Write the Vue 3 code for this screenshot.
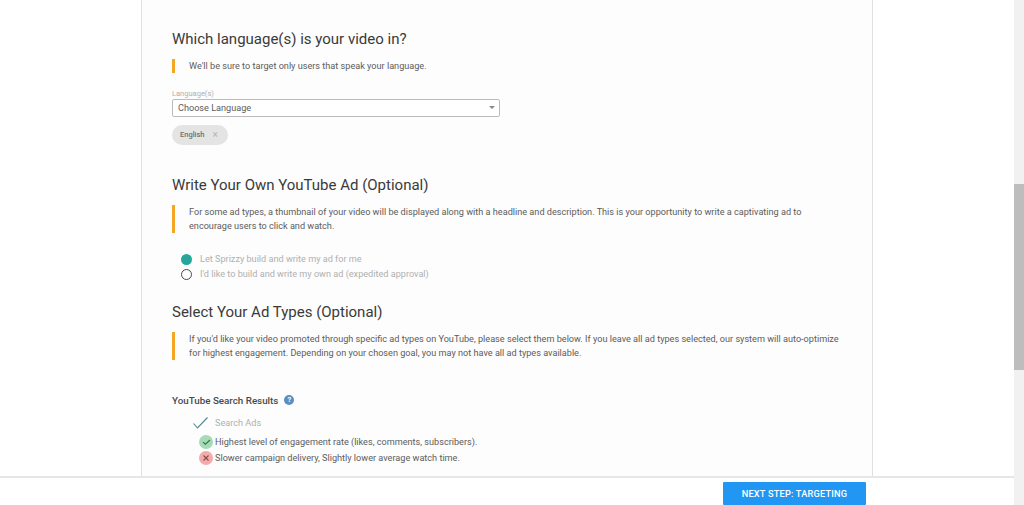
<script setup>
const noteTop = "We'll be sure to target only users that speak your language."
</script>

<template>
  <div class="page">
    <div class="main">
      <div class="scroller">
        <div class="card">
          <h2 class="h1">Which language(s) is your video in?</h2>
          <p class="note one">{{ noteTop }}</p>
          <div class="lab">Language(s)</div>
          <div class="select">
            <span>Choose Language</span>
            <i class="caret"></i>
          </div>
          <div class="chip"><span>English</span><span class="x">×</span></div>

          <h2 class="h2">Write Your Own YouTube Ad (Optional)</h2>
          <p class="note">For some ad types, a thumbnail of your video will be displayed along with a headline and description. This is your opportunity to write a captivating ad to encourage users to click and watch.</p>
          <div class="radios">
            <div class="radio"><i class="dot on"></i><span>Let Sprizzy build and write my ad for me</span></div>
            <div class="radio"><i class="dot"></i><span>I'd like to build and write my own ad (expedited approval)</span></div>
          </div>

          <h2 class="h3">Select Your Ad Types (Optional)</h2>
          <p class="note">If you'd like your video promoted through specific ad types on YouTube, please select them below. If you leave all ad types selected, our system will auto-optimize for highest engagement. Depending on your chosen goal, you may not have all ad types available.</p>

          <div class="sub">
            <span>YouTube Search Results</span>
            <i class="help">?</i>
          </div>
          <div class="adtype">
            <svg class="tick" width="15" height="12" viewBox="0 0 15 12"><path d="M0.5 6.5 L4.5 11 L14.5 0.5" fill="none" stroke="#4f8596" stroke-width="1.1"/></svg>
            <span>Search Ads</span>
          </div>
          <div class="pro first">
            <i class="badge good"><svg width="9" height="8" viewBox="0 0 9 8"><path d="M1 4.2 L3.4 6.2 L8 2" fill="none" stroke="#3f6b52" stroke-width="1.1"/></svg></i>
            <span>Highest level of engagement rate (likes, comments, subscribers).</span>
          </div>
          <div class="pro">
            <i class="badge bad"><svg width="8" height="8" viewBox="0 0 8 8"><path d="M1.5 1.5 L6.5 6.5 M6.5 1.5 L1.5 6.5" fill="none" stroke="#8a4a4a" stroke-width="1.1"/></svg></i>
            <span>Slower campaign delivery, Slightly lower average watch time.</span>
          </div>
        </div>
      </div>
      <div class="footer">
        <button class="next">NEXT STEP: TARGETING</button>
      </div>
    </div>
    <div class="track"><div class="thumb"></div></div>
  </div>
</template>

<style>
html, body { margin: 0; background: #fff; overflow: hidden; }
</style>

<style scoped>
.page {
  width: 1024px;
  height: 505px;
  display: flex;
  overflow: hidden;
  font-family: Roboto, "Liberation Sans", sans-serif;
  color: #444;
}
.main { width: 1014px; height: 505px; display: flex; flex-direction: column; }
.scroller { flex: 1; min-height: 0; overflow: hidden; }
.card {
  box-sizing: border-box;
  width: 732px;
  height: 476px;
  margin: 0 auto;
  padding: 30px 30px 0;
  background: #fdfdfd;
  border-left: 1px solid #e0e0e0;
  border-right: 1px solid #e0e0e0;
}
h2 { margin: 0; font-weight: 400; font-size: 15px; line-height: 19px; color: #3a3a3a; }
.note {
  margin: 10.5px 0 0;
  border-left: 3px solid #f5a623;
  padding-left: 14px;
  font-size: 9.15px;
  line-height: 14px;
  color: #5c5c5c;
}
.note.one { margin-top: 9.5px; }
.lab { margin-top: 16px; font-size: 7.5px; line-height: 9px; color: #b0b0b0; }
.select {
  box-sizing: border-box;
  width: 328px;
  height: 18px;
  margin-top: 1px;
  padding: 0 4px 0 5px;
  display: flex;
  align-items: center;
  justify-content: space-between;
  background: #fff;
  border: 1px solid #bbb;
  border-radius: 2px;
  font-size: 9.15px;
  color: #5c5c5c;
}
.caret {
  width: 0; height: 0;
  border-left: 3px solid transparent;
  border-right: 3px solid transparent;
  border-top: 3px solid #888;
}
.chip {
  box-sizing: border-box;
  width: 56px;
  height: 20px;
  margin-top: 8px;
  padding-left: 8px;
  display: flex;
  align-items: center;
  gap: 8px;
  background: #e4e4e4;
  border-radius: 10px;
  font-size: 7.5px;
  font-weight: 500;
  color: #707070;
}
.x { color: #b5b5b5; font-size: 10px; font-weight: 400; line-height: 10px; }
.h2 { margin-top: 31px; }
.h3 { margin-top: 21px; }
.radios { margin-top: 18.5px; padding-left: 9px; }
.radio {
  height: 15px;
  display: flex;
  align-items: center;
  gap: 8px;
  font-size: 9.15px;
  color: #b0b0b0;
}
.dot {
  box-sizing: border-box;
  width: 11px; height: 11px;
  border-radius: 50%;
  border: 1.5px solid #4a4a4a;
}
.dot.on { border: none; background: #26a69a; }
.sub {
  margin-top: 34px;
  display: flex;
  align-items: center;
  gap: 6px;
  height: 12px;
  font-size: 9.8px;
  font-weight: 500;
  color: #4a4a4a;
}
.help {
  width: 10px; height: 10px;
  border-radius: 50%;
  background: #5b8ec2;
  color: #fff;
  font-size: 7.5px;
  font-style: normal;
  font-weight: 700;
  line-height: 10px;
  text-align: center;
}
.adtype {
  margin-top: 10.5px;
  padding-left: 21px;
  height: 13px;
  display: flex;
  align-items: center;
  gap: 7px;
  font-size: 9.15px;
  color: #b0b0b0;
}
.pro {
  height: 16px;
  margin-left: 27px;
  display: flex;
  align-items: center;
  gap: 2px;
  font-size: 9.15px;
  color: #5c5c5c;
}
.pro.first { margin-top: 4.5px; }
.badge {
  width: 14px; height: 14px;
  border-radius: 50%;
  display: flex;
  align-items: center;
  justify-content: center;
}
.good { background: #a3dcb5; }
.bad { background: #f4abab; }
.footer {
  box-sizing: border-box;
  height: 29px;
  background: #fff;
  border-top: 2px solid #e6e6e6;
  display: flex;
  justify-content: flex-end;
  padding: 4px 148px 0 0;
}
.next {
  width: 143px;
  height: 23px;
  border: none;
  border-radius: 1px;
  background: #2196f3;
  color: #fff;
  font-family: inherit;
  font-size: 9.2px;
  font-weight: 500;
  letter-spacing: 0.2px;
  padding: 0;
}
.track { width: 10px; height: 505px; background: #f1f1f1; padding-top: 184px; box-sizing: border-box; }
.thumb { height: 186px; background: #bdbdbd; }
</style>
